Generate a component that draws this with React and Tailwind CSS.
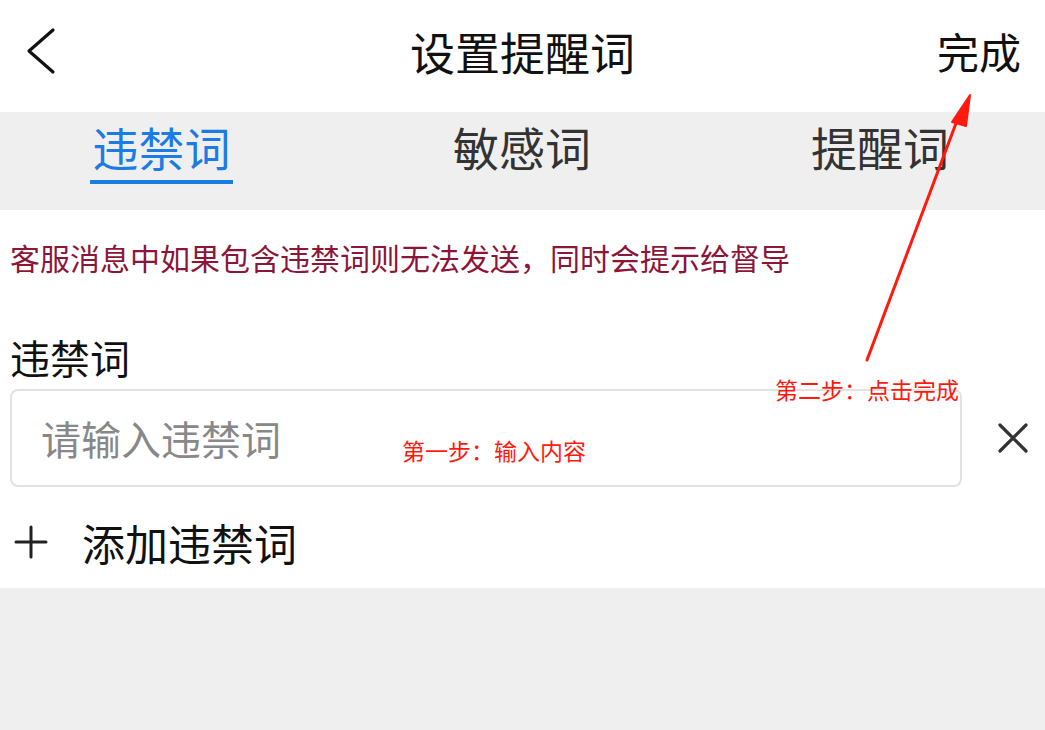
export default function App() {
  const font = { fontFamily: '"Noto Sans CJK SC", "Noto Sans", sans-serif' };
  return (
    <div className="relative w-[1045px] h-[730px] bg-[#efefef] overflow-hidden" style={font}>
      {/* Header */}
      <div className="relative h-[112px] bg-white flex items-center pb-[10px]">
        <div className="w-[130px] pl-[24px] flex items-center">
          <svg width="34" height="48" viewBox="0 0 34 48" fill="none">
            <path d="M29 3 L5 24 L29 45" stroke="#111" strokeWidth="3.2" strokeLinecap="round" strokeLinejoin="round" />
          </svg>
        </div>
        <div className="flex-1 text-center text-[45px] leading-none text-[#111]">设置提醒词</div>
        <div className="w-[130px] text-right pr-[24px] text-[42px] leading-none text-[#111]">完成</div>
      </div>
      {/* Tabs */}
      <div className="h-[98px] bg-[#efefef] flex pl-[90px] gap-[220px]">
        <div className="flex flex-col items-center pt-[7px]">
          <div className="text-[46px] leading-[54px] text-[#1c7ce5]">违禁词</div>
          <div className="mt-[7px] h-[4px] w-[143px] bg-[#1c7ce5]" />
        </div>
        <div className="pt-[7px] text-[46px] leading-[54px] text-[#333]">敏感词</div>
        <div className="pt-[7px] text-[46px] leading-[54px] text-[#333]">提醒词</div>
      </div>
      {/* Content */}
      <div className="h-[378px] bg-white flex flex-col">
        <div className="pt-[27px] pl-[10px] text-[30px] leading-[40px] text-[#8c1538]">
          客服消息中如果包含违禁词则无法发送，同时会提示给督导
        </div>
        <div className="mt-[57px] pl-[10px] text-[40px] leading-[46px] text-[#111]">违禁词</div>
        <div className="mt-[9px] flex items-center">
          <div className="ml-[10px] w-[952px] h-[98px] border-2 border-[#e2e2e2] rounded-[8px] flex items-center pl-[29px]">
            <span className="text-[40px] leading-none text-[#888]">请输入违禁词</span>
          </div>
          <div className="flex-1 flex justify-center pl-[18px]">
            <svg width="32" height="32" viewBox="0 0 32 32" fill="none">
              <path d="M3 3 L29 29 M29 3 L3 29" stroke="#333" strokeWidth="3.2" strokeLinecap="round" />
            </svg>
          </div>
        </div>
        <div className="mt-[27px] flex items-center pl-[14px]">
          <svg width="34" height="34" viewBox="0 0 34 34" fill="none">
            <path d="M17 2 V32 M2 17 H32" stroke="#222" strokeWidth="3" strokeLinecap="round" />
          </svg>
          <span className="ml-[34px] text-[43px] leading-[56px] text-[#111]">添加违禁词</span>
        </div>
      </div>

      {/* Annotations */}
      <div className="absolute left-[402px] top-[435px] text-[23px] leading-[30px] text-[#ff1a10]">第一步：输入内容</div>
      <div className="absolute left-[775px] top-[374px] text-[23px] leading-[30px] text-[#ff1a10]">第二步：点击完成</div>
      <svg className="absolute left-0 top-0" width="1045" height="730" viewBox="0 0 1045 730" fill="none">
        <path d="M867 360 L958 118" stroke="#ff1a10" strokeWidth="3" strokeLinecap="round" />
        <path d="M970 95 L952 122 L966 126 Z" fill="#ff1a10" stroke="#ff1a10" strokeWidth="2" strokeLinejoin="round" />
      </svg>
    </div>
  );
}
